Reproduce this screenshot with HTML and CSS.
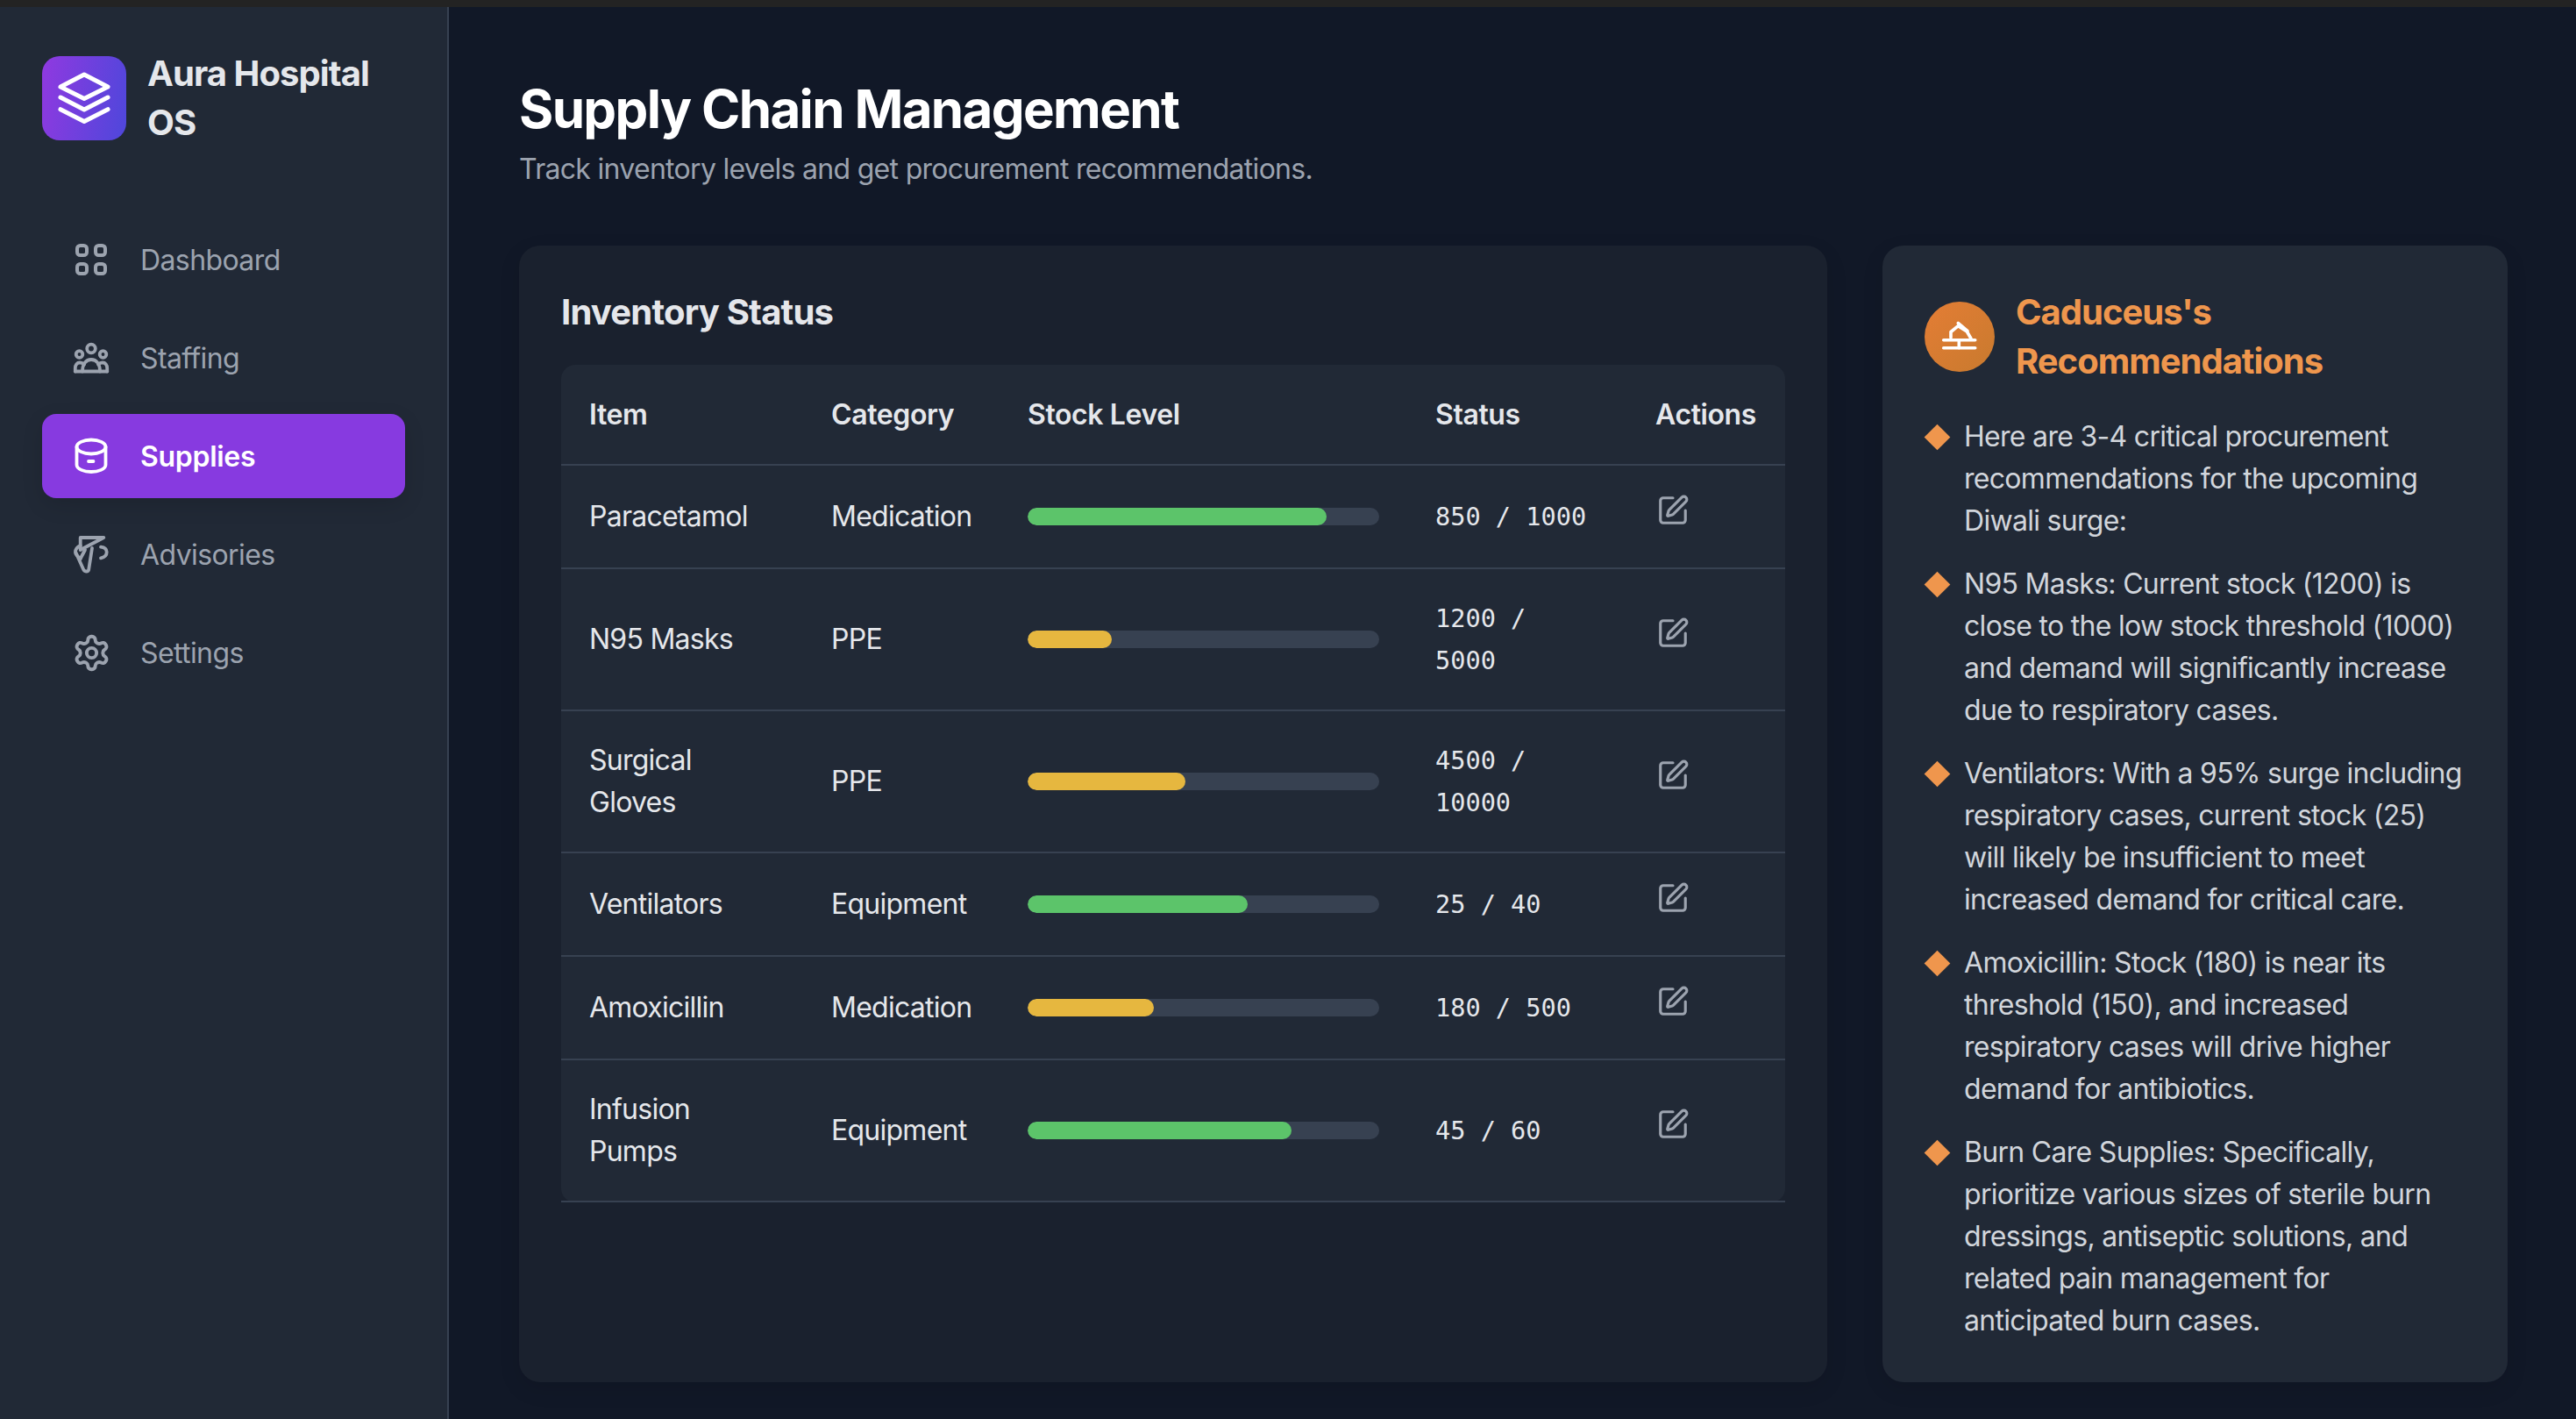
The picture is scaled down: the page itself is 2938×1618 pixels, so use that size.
FILE: index.html
```html
<!DOCTYPE html>
<html lang="en">
<head>
  <meta charset="UTF-8">
  <title>Aura Hospital OS</title>
  <link rel="stylesheet" href="styles.css">
</head>
<body>
  <div class="top-strip"></div>
  <div class="app">
    <aside class="sidebar">
      <div class="brand">
        <div class="brand-logo">
          <svg viewBox="0 0 96 96" class="brand-icon">
            <path d="M48 21 75 35 48 48.5 21 35Z"/>
            <path d="M21 47 48 61 75 47"/>
            <path d="M21 60.7 48 74.5 75 60.7"/>
          </svg>
        </div>
        <div class="brand-name">Aura Hospital OS</div>
      </div>
      <nav class="nav">
        <a class="nav-item">
          <svg class="nav-icon nav-icon-grid" viewBox="0 0 40 40">
            <rect x="4" y="4" width="11" height="11" rx="3.5"/>
            <rect x="25" y="4" width="11" height="11" rx="3.5"/>
            <rect x="4" y="25" width="11" height="11" rx="3.5"/>
            <rect x="25" y="25" width="11" height="11" rx="3.5"/>
          </svg>
          <span>Dashboard</span>
        </a>
        <a class="nav-item">
          <svg class="nav-icon" viewBox="0 0 40 40">
            <circle cx="20" cy="9.5" r="4.8"/>
            <circle cx="6.5" cy="16" r="3.8"/>
            <circle cx="33.5" cy="16" r="3.8"/>
            <path d="M1.8 35.5H38.2"/>
            <path d="M10 35.5C10 27 14 22 20 22S30 27 30 35.5"/>
            <path d="M1.8 35.5V32C1.8 28 4 25.5 7 25.5 9 25.5 10.5 26 12 27.5"/>
            <path d="M38.2 35.5V32C38.2 28 36 25.5 33 25.5 31 25.5 29.5 26 28 27.5"/>
          </svg>
          <span>Staffing</span>
        </a>
        <a class="nav-item active">
          <svg class="nav-icon" viewBox="0 0 40 40">
            <ellipse cx="20" cy="9.5" rx="16.5" ry="8"/>
            <path d="M3.5 9.5V30C3.5 35 12 38 20 38S36.5 35 36.5 30V9.5"/>
            <path d="M17 26H22.5"/>
          </svg>
          <span>Supplies</span>
        </a>
        <a class="nav-item">
          <svg class="nav-icon nav-icon-tall" viewBox="0 0 40 44">
            <path d="M34.3 3H7.7V17Z"/>
            <path d="M7.7 12C3.5 14 2 17 2 19.5 2 22.5 5 25 7.7 27"/>
            <path d="M31 13.7C35.5 14.2 37.7 16.5 37.7 19.5 37.7 23 35 25.5 31 26.3"/>
            <path d="M2.5 20 11 39C12 42 16.5 42.5 17.2 39.5L21 15"/>
            <path d="M13 17 7.7 27"/>
          </svg>
          <span>Advisories</span>
        </a>
        <a class="nav-item">
          <svg class="nav-icon nav-icon-gear" viewBox="0 0 24 24">
            <path d="M12.22 2h-.44a2 2 0 0 0-2 2v.18a2 2 0 0 1-1 1.73l-.43.25a2 2 0 0 1-2 0l-.15-.08a2 2 0 0 0-2.73.73l-.22.38a2 2 0 0 0 .73 2.73l.15.1a2 2 0 0 1 1 1.72v.51a2 2 0 0 1-1 1.74l-.15.09a2 2 0 0 0-.73 2.73l.22.38a2 2 0 0 0 2.73.73l.15-.08a2 2 0 0 1 2 0l.43.25a2 2 0 0 1 1 1.73V20a2 2 0 0 0 2 2h.44a2 2 0 0 0 2-2v-.18a2 2 0 0 1 1-1.73l.43-.25a2 2 0 0 1 2 0l.15.08a2 2 0 0 0 2.73-.73l.22-.39a2 2 0 0 0-.73-2.73l-.15-.08a2 2 0 0 1-1-1.74v-.5a2 2 0 0 1 1-1.74l.15-.09a2 2 0 0 0 .73-2.73l-.22-.38a2 2 0 0 0-2.73-.73l-.15.08a2 2 0 0 1-2 0l-.43-.25a2 2 0 0 1-1-1.73V4a2 2 0 0 0-2-2z"/>
            <circle cx="12" cy="12" r="3"/>
          </svg>
          <span>Settings</span>
        </a>
      </nav>
    </aside>

    <main class="main">
      <h1 class="page-title">Supply Chain Management</h1>
      <p class="page-subtitle">Track inventory levels and get procurement recommendations.</p>

      <div class="content-grid">
        <section class="card inventory-card">
          <h2 class="card-title">Inventory Status</h2>
          <div class="table-wrap">
            <table class="inventory-table">
              <colgroup>
                <col class="col-item"><col class="col-category"><col class="col-stock"><col class="col-status"><col class="col-actions">
              </colgroup>
              <thead>
                <tr><th>Item</th><th>Category</th><th>Stock Level</th><th>Status</th><th>Actions</th></tr>
              </thead>
              <tbody>
                <tr>
                  <td>Paracetamol</td>
                  <td>Medication</td>
                  <td><div class="stock-bar"><div class="stock-fill good" style="width: 85%"></div></div></td>
                  <td class="stock-count">850 / 1000</td>
                  <td><button class="edit-btn"><svg viewBox="0 0 24 24"><path d="M12 3H5a2 2 0 0 0-2 2v14a2 2 0 0 0 2 2h14a2 2 0 0 0 2-2v-7"/><path d="M18.375 2.625a1 1 0 0 1 3 3l-9.013 9.014a2 2 0 0 1-.853.505l-2.873.84a.5.5 0 0 1-.62-.62l.84-2.873a2 2 0 0 1 .506-.852z"/></svg></button></td>
                </tr>
                <tr>
                  <td>N95 Masks</td>
                  <td>PPE</td>
                  <td><div class="stock-bar"><div class="stock-fill low" style="width: 24%"></div></div></td>
                  <td class="stock-count">1200 / 5000</td>
                  <td><button class="edit-btn"><svg viewBox="0 0 24 24"><path d="M12 3H5a2 2 0 0 0-2 2v14a2 2 0 0 0 2 2h14a2 2 0 0 0 2-2v-7"/><path d="M18.375 2.625a1 1 0 0 1 3 3l-9.013 9.014a2 2 0 0 1-.853.505l-2.873.84a.5.5 0 0 1-.62-.62l.84-2.873a2 2 0 0 1 .506-.852z"/></svg></button></td>
                </tr>
                <tr>
                  <td>Surgical Gloves</td>
                  <td>PPE</td>
                  <td><div class="stock-bar"><div class="stock-fill low" style="width: 45%"></div></div></td>
                  <td class="stock-count">4500 / 10000</td>
                  <td><button class="edit-btn"><svg viewBox="0 0 24 24"><path d="M12 3H5a2 2 0 0 0-2 2v14a2 2 0 0 0 2 2h14a2 2 0 0 0 2-2v-7"/><path d="M18.375 2.625a1 1 0 0 1 3 3l-9.013 9.014a2 2 0 0 1-.853.505l-2.873.84a.5.5 0 0 1-.62-.62l.84-2.873a2 2 0 0 1 .506-.852z"/></svg></button></td>
                </tr>
                <tr>
                  <td>Ventilators</td>
                  <td>Equipment</td>
                  <td><div class="stock-bar"><div class="stock-fill good" style="width: 62.5%"></div></div></td>
                  <td class="stock-count">25 / 40</td>
                  <td><button class="edit-btn"><svg viewBox="0 0 24 24"><path d="M12 3H5a2 2 0 0 0-2 2v14a2 2 0 0 0 2 2h14a2 2 0 0 0 2-2v-7"/><path d="M18.375 2.625a1 1 0 0 1 3 3l-9.013 9.014a2 2 0 0 1-.853.505l-2.873.84a.5.5 0 0 1-.62-.62l.84-2.873a2 2 0 0 1 .506-.852z"/></svg></button></td>
                </tr>
                <tr>
                  <td>Amoxicillin</td>
                  <td>Medication</td>
                  <td><div class="stock-bar"><div class="stock-fill low" style="width: 36%"></div></div></td>
                  <td class="stock-count">180 / 500</td>
                  <td><button class="edit-btn"><svg viewBox="0 0 24 24"><path d="M12 3H5a2 2 0 0 0-2 2v14a2 2 0 0 0 2 2h14a2 2 0 0 0 2-2v-7"/><path d="M18.375 2.625a1 1 0 0 1 3 3l-9.013 9.014a2 2 0 0 1-.853.505l-2.873.84a.5.5 0 0 1-.62-.62l.84-2.873a2 2 0 0 1 .506-.852z"/></svg></button></td>
                </tr>
                <tr>
                  <td>Infusion Pumps</td>
                  <td>Equipment</td>
                  <td><div class="stock-bar"><div class="stock-fill good" style="width: 75%"></div></div></td>
                  <td class="stock-count">45 / 60</td>
                  <td><button class="edit-btn"><svg viewBox="0 0 24 24"><path d="M12 3H5a2 2 0 0 0-2 2v14a2 2 0 0 0 2 2h14a2 2 0 0 0 2-2v-7"/><path d="M18.375 2.625a1 1 0 0 1 3 3l-9.013 9.014a2 2 0 0 1-.853.505l-2.873.84a.5.5 0 0 1-.62-.62l.84-2.873a2 2 0 0 1 .506-.852z"/></svg></button></td>
                </tr>
              </tbody>
            </table>
          </div>
        </section>

        <section class="card advice-card">
          <div class="advice-header">
            <div class="advice-badge">
              <svg viewBox="0 0 80 80">
                <path d="M21.7 43.7H57.7"/>
                <path d="M21.7 52.7H57.7"/>
                <path d="M39.3 43.7V52.7"/>
                <path d="M30 41V34.5L38.3 27.7 48.3 34 53 42"/>
                <path d="M38.3 24.5 49 33.5"/>
              </svg>
            </div>
            <h2 class="advice-title">Caduceus's Recommendations</h2>
          </div>
          <ul class="advice-list">
            <li>Here are 3-4 critical procurement recommendations for the upcoming Diwali surge:</li>
            <li>N95 Masks: Current stock (1200) is close to the low stock threshold (1000) and demand will significantly increase due to respiratory cases.</li>
            <li>Ventilators: With a 95% surge including respiratory cases, current stock (25) will likely be insufficient to meet increased demand for critical care.</li>
            <li>Amoxicillin: Stock (180) is near its threshold (150), and increased respiratory cases will drive higher demand for antibiotics.</li>
            <li>Burn Care Supplies: Specifically, prioritize various sizes of sterile burn dressings, antiseptic solutions, and related pain management for anticipated burn cases.</li>
          </ul>
        </section>
      </div>
    </main>
  </div>
</body>
</html>
```

FILE: styles.css
```css
:root {
  --bg-main: #111827;
  --bg-panel: #212936;
  --bg-card: #1a212e;
  --line: #374151;
  --text: #e5e7eb;
  --text-soft: #d1d5db;
  --text-muted: #9ca3af;
  --purple: #873ae0;
  --orange: #ef964d;
}

* {
  margin: 0;
  padding: 0;
  box-sizing: border-box;
}

html, body {
  height: 100%;
}

body {
  display: flex;
  flex-direction: column;
  font-family: Inter, "Noto Sans", sans-serif;
  color: var(--text);
  background: var(--bg-main);
  overflow: hidden;
}

.top-strip {
  height: 8px;
  background: #232323;
}

.app {
  flex: 1;
  display: flex;
  min-height: 0;
}

/* sidebar */
.sidebar {
  width: 512px;
  flex-shrink: 0;
  padding: 48px;
  background: var(--bg-panel);
  border-right: 2px solid var(--line);
}

.brand {
  display: flex;
  align-items: center;
  gap: 24px;
  margin-bottom: 80px;
}

.brand-logo {
  width: 96px;
  height: 96px;
  flex-shrink: 0;
  border-radius: 20px;
  background: linear-gradient(100deg, #9039e0, #4e47db);
}

.brand-icon {
  display: block;
  width: 96px;
  height: 96px;
  fill: none;
  stroke: #fff;
  stroke-width: 5;
  stroke-linecap: round;
  stroke-linejoin: round;
}

.brand-name {
  font-size: 40px;
  font-weight: 700;
  line-height: 56px;
  letter-spacing: -0.93px;
  color: var(--text);
}

.nav {
  display: flex;
  flex-direction: column;
  gap: 16px;
}

.nav-item {
  display: flex;
  align-items: center;
  gap: 36px;
  height: 96px;
  padding-left: 36px;
  border-radius: 16px;
  font-size: 32px;
  letter-spacing: -0.6px;
  color: var(--text-muted);
}

.nav-item.active {
  background: var(--purple);
  color: #fff;
  font-weight: 600;
  letter-spacing: -0.3px;
  box-shadow: 0 8px 24px rgba(0, 0, 0, 0.12);
}

.nav-icon {
  width: 40px;
  height: 40px;
  flex-shrink: 0;
  overflow: visible;
  fill: none;
  stroke: currentColor;
  stroke-width: 3.8;
  stroke-linecap: round;
  stroke-linejoin: round;
}

.nav-icon-grid {
  stroke-width: 4;
}

.nav-icon-tall {
  height: 44px;
}

.nav-icon-gear {
  width: 45px;
  height: 45px;
  margin: 0 -2.5px;
  stroke-width: 2.1;
}

/* main column */
.main {
  flex: 1;
  min-width: 0;
  display: flex;
  flex-direction: column;
  padding: 80px 78px 42px 80px;
}

.page-title {
  font-size: 60px;
  font-weight: 700;
  line-height: 72px;
  letter-spacing: -1.65px;
  color: #fff;
}

.page-subtitle {
  margin-top: 9px;
  font-size: 32px;
  line-height: 48px;
  letter-spacing: -0.7px;
  color: var(--text-muted);
}

.content-grid {
  flex: 1;
  min-height: 0;
  margin-top: 63px;
  display: grid;
  grid-template-columns: 1492px 713px;
  grid-template-rows: minmax(0, 1fr);
  gap: 63px;
}

.card {
  padding: 48px;
  border-radius: 24px;
  box-shadow: 0 8px 24px rgba(0, 0, 0, 0.1);
}

.inventory-card {
  background: var(--bg-card);
}

.card-title {
  height: 40px;
  margin-bottom: 48px;
  font-size: 40px;
  font-weight: 700;
  line-height: 56px;
  letter-spacing: -0.8px;
  color: var(--text);
}

/* table */
.table-wrap {
  background: var(--bg-panel);
  border-radius: 16px;
}

.inventory-table {
  width: 100%;
  table-layout: fixed;
  border-collapse: collapse;
  font-size: 32px;
  line-height: 48px;
  letter-spacing: -0.75px;
}

.col-item { width: 276px; }
.col-category { width: 224px; }
.col-stock { width: 465px; }
.col-status { width: 251px; }
.col-actions { width: 180px; }

.inventory-table th {
  height: 114px;
  padding: 0 32px;
  text-align: left;
  font-weight: 600;
  letter-spacing: -0.4px;
  border-bottom: 2px solid var(--line);
}

.inventory-table td {
  padding: 32px;
  border-bottom: 2px solid var(--line);
}

.stock-bar {
  height: 20px;
  border-radius: 10px;
  background: var(--line);
  overflow: hidden;
}

.stock-fill {
  height: 100%;
  border-radius: 10px;
}

.stock-fill.good {
  background: #5cc46a;
}

.stock-fill.low {
  background: #e6b73f;
}

.inventory-table .stock-count {
  font-family: "DejaVu Sans Mono", "Liberation Mono", monospace;
  font-size: 28.6px;
  letter-spacing: 0;
}

.edit-btn {
  display: block;
  width: 40px;
  height: 52px;
  padding-bottom: 14px;
  background: none;
  border: none;
  color: var(--text-muted);
}

.edit-btn svg {
  display: block;
  width: 38px;
  height: 38px;
  margin-left: 1px;
  fill: none;
  stroke: currentColor;
  stroke-width: 2;
  stroke-linecap: round;
  stroke-linejoin: round;
}

/* recommendations */
.advice-card {
  background: var(--bg-panel);
}

.advice-header {
  display: flex;
  align-items: center;
  gap: 24px;
  margin-bottom: 34px;
}

.advice-badge {
  width: 80px;
  height: 80px;
  flex-shrink: 0;
  border-radius: 50%;
  background: linear-gradient(135deg, #e47d35, #c87a2e);
}

.advice-badge svg {
  display: block;
  width: 80px;
  height: 80px;
  fill: none;
  stroke: #fff;
  stroke-width: 3.6;
  stroke-linecap: round;
  stroke-linejoin: round;
}

.advice-title {
  font-size: 40px;
  font-weight: 700;
  line-height: 56px;
  letter-spacing: -1px;
  color: var(--orange);
}

.advice-list {
  list-style: none;
  display: flex;
  flex-direction: column;
  gap: 24px;
  font-size: 32px;
  line-height: 48px;
  letter-spacing: -0.7px;
  color: var(--text-soft);
}

.advice-list li {
  position: relative;
  padding-left: 45px;
}

.advice-list li::before {
  content: "";
  position: absolute;
  left: 4px;
  top: 14px;
  width: 21px;
  height: 21px;
  background: var(--orange);
  transform: rotate(45deg);
}
```
